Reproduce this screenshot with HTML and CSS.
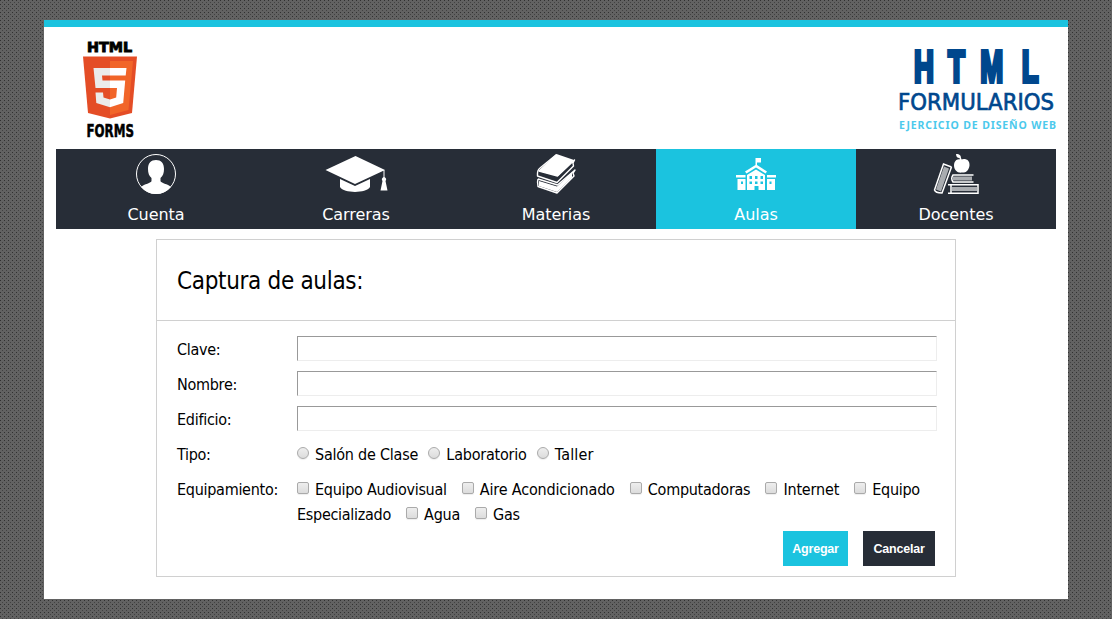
FILE: index.html
```html
<!DOCTYPE html>
<html lang="es">
<head>
<meta charset="utf-8">
<title>Captura de aulas</title>
<link rel="stylesheet" href="styles.css">
</head>
<body>
<div class="page">
  <header class="header">
    <svg class="logo" width="90" height="110" viewBox="70 35 90 110" role="img" aria-label="HTML5 Forms">
      <text x="87" y="51.500" class="logo-top" textLength="45" lengthAdjust="spacingAndGlyphs">HTML</text>
      <path fill="#e44d26" d="M83 56.500h54l-5 56.500-22 5.500-22-5.500z"/>
      <path fill="#f16529" d="M110 61h23l-4.500 49-18.500 5z"/>
      <path fill="#ebebeb" d="M110 68H93.500l2 20H110v-7.500h-7.500l-.5-5h8zM110 99.500l-6.500-2-.5-5h-7.500l.8 10.500 13.700 4.200z"/>
      <path fill="#fff" d="M110 68h16.500l-.8 7.500H110zM110 80.500h15.200l-2 22.500-13.200 4.200v-7.700l6.200-2 .8-9.500h-7z"/>
      <text x="86.500" y="136.500" class="logo-bottom" textLength="47.500" lengthAdjust="spacingAndGlyphs">FORMS</text>
    </svg>
    <svg class="brand" width="166" height="100" viewBox="894 40 166 100" role="img" aria-label="HTML Formularios">
      <g class="brand-html" transform="scale(.62 1)">
        <text y="82" x="1474 1529 1581 1648">HTML</text>
      </g>
      <text x="898" y="110" class="brand-name" textLength="156" lengthAdjust="spacingAndGlyphs">FORMULARIOS</text>
      <text x="899" y="128.500" class="brand-sub" textLength="157" lengthAdjust="spacing">EJERCICIO DE DISEÑO WEB</text>
    </svg>
  </header>
  <nav class="nav">
    <a class="nav-item">
      <svg class="icon" viewBox="0 0 80 50"><circle cx="40" cy="25" r="19.500" fill="none" stroke="#fff"/><path fill="#fff" d="M40 11c5 0 8 3 8 9 0 4-1 7-3.500 9v3c0 2 7.500 3 10.500 6a19.500 19.500 0 0 1-30 0c3-3 10.500-4 10.500-6v-3c-2.500-2-3.500-5-3.500-9 0-6 3-9 8-9z"/></svg>
      <span>Cuenta</span>
    </a>
    <a class="nav-item">
      <svg class="icon" viewBox="0 0 80 50"><path fill="#fff" d="M39.500 7 69 21 39 35 9.500 21zM24 30l15 7 15-7v8c-4 6.500-26 6.500-30 0zM67.500 21h1v7c2 1 2 3 1 4l2 9.500h-7l2-9.500c-1-1-1-3 1-4z"/></svg>
      <span>Carreras</span>
    </a>
    <a class="nav-item">
      <svg class="icon" viewBox="0 0 80 50"><path fill="#fff" d="M40.500 5 58 11 42 27 22 22zM23 32l18 5.500 15-14v5L41 43l-18-6z"/><path fill="none" stroke="#fff" stroke-width="1.400" stroke-linejoin="round" d="M40.500 5.500 24 19q-3 2-2.500 8l19.500 6.500L57.500 17l-.5-3 1.500-3L41.500 27 23 22M22 30q-1 3 0 7.500L41 44l17-17-1-3 2-3-17.500 15L22 30"/></svg>
      <span>Materias</span>
    </a>
    <a class="nav-item nav-item--active">
      <svg class="icon" viewBox="0 0 80 50"><path fill="#fff" fill-rule="evenodd" d="M39.500 16V9h5.500v4.500h-4V16L51 22.500l-1.500 2L40 18.500l-9.500 6-1.500-2zM40 20.500l9 5.500v15h-6.500v-4h-4v4H31V26zM33.500 27v3H36v-3zm5.500 0v3h2.500v-3zm5.500 0v3H47v-3zm-11 5.500V35H36v-2.500zm5.500 0V35h2.500v-2.500zm5.500 0V35H47v-2.500zM20 26h9.500v2.500H20zm31 0h9v2.500h-9zM21.500 30h8v11h-8zm29.500 0h8v11h-8zM25 32.500V35h2v-2.500zm28.500 0V35h2v-2.500z"/></svg>
      <span>Aulas</span>
    </a>
    <a class="nav-item">
      <svg class="icon" viewBox="0 0 80 50"><path fill="#fff" d="M45 10.500c4-1.500 9 0 8.500 6-.5 4-3 7-5.500 7s-3 .3-5 0c-4-1-6-6-4.500-10 1-3 4-4 6.500-3zM40 5c4 0 5 2 5 4 1 1 0 3 0 3s-1-3-2-3-3-1-3-4z"/><g fill="#a9acb0"><path d="m28 17.500 5 2-8 23-5-2z"/><path d="M37 27.500h19v4H37zM36 38h25v4H36z"/></g><path fill="none" stroke="#fff" stroke-width="1.500" d="m35.500 18-8-3-9 26q1 3 7.500 3l9.500-26M57.500 26H37q-2.500 3.500 0 7h20.500M32 35.800h30v8.400H32M35 36v8"/></svg>
      <span>Docentes</span>
    </a>
  </nav>
  <form class="form">
    <h1 class="form-title">Captura de aulas:</h1>
    <div class="fields">
      <label class="name" for="clave">Clave:</label><input class="text-input" id="clave" type="text">
      <label class="name" for="nombre">Nombre:</label><input class="text-input" id="nombre" type="text">
      <label class="name" for="edificio">Edificio:</label><input class="text-input" id="edificio" type="text">
      <span class="name">Tipo:</span>
      <div class="options radios"><label><input type="radio" name="tipo">Salón de Clase</label><label><input type="radio" name="tipo">Laboratorio</label><label class="wide"><input type="radio" name="tipo">Taller</label></div>
      <span class="name">Equipamiento:</span>
      <div class="options checks">
        <label><input type="checkbox">Equipo Audiovisual</label>
        <label class="loose"><input type="checkbox">Aire Acondicionado</label>
        <label><input type="checkbox">Computadoras</label>
        <label class="loose"><input type="checkbox">Internet</label>
        <label><input type="checkbox" id="especializado">Equipo</label>
        <label for="especializado">Especializado</label>
        <label><input type="checkbox">Agua</label>
        <label><input type="checkbox">Gas</label>
      </div>
    </div>
    <div class="actions"><button class="button button--primary" type="button">Agregar</button><button class="button" type="button">Cancelar</button></div>
  </form>
</div>
</body>
</html>
```
FILE: styles.css
```css
* { box-sizing: border-box; }
body {
  margin: 0;
  padding: 20px 44px;
  min-height: 619px;
  background-color: #626262;
  background-image:
    conic-gradient(from 0deg at 1px 1px, transparent 75%, #303030 0),
    conic-gradient(from 0deg at 1px 1px, transparent 75%, #424242 0);
  background-size: 4px 4px, 4px 4px;
  background-position: 0 0, 2px 2px;
  font-family: "DejaVu Sans Condensed", "DejaVu Sans", Tahoma, sans-serif;
  font-size: 16px;
  color: #000;
}
.page { height: 579px; padding: 0 12px; border-top: 7px solid #1bc3df; background: #fff; }
.header { display: flex; justify-content: space-between; height: 122px; padding-top: 8px; }
.logo { margin-left: 14px; overflow: visible; }
.brand { margin: 5px -4px 0 0; overflow: visible; }
.logo-top { font: bold 13.500px "DejaVu Sans", sans-serif; stroke: #000; stroke-width: .9px; }
.logo-bottom { font: bold 17px "DejaVu Sans Condensed", "DejaVu Sans", sans-serif; stroke: #000; stroke-width: .5px; }
.brand-html { font: bold 44.500px "Liberation Sans", sans-serif; fill: #00478d; stroke: #00478d; stroke-width: 4px; }
.brand-name { font: 23px "DejaVu Sans", sans-serif; fill: #00478d; stroke: #00478d; stroke-width: .7px; }
.brand-sub { font: bold 10.500px "Noto Sans", sans-serif; fill: #4cc9ec; }
.nav { display: grid; grid-template-columns: repeat(5, 1fr); height: 80px; background: #272d37; }
.nav-item { display: flex; flex-direction: column; align-items: center; height: 80px; color: #fff; font-family: "DejaVu Sans", Verdana, sans-serif; line-height: 32px; letter-spacing: -.05px; }
.nav-item--active { background: #1bc3df; }
.icon { display: block; flex: none; width: 80px; height: 50px; }
.form { width: 800px; height: 338px; margin: 10px auto 0; border: 1px solid #d0d0d0; }
.form-title { height: 81px; margin: 0; padding: 1px 20px 0; border-bottom: 1px solid #d0d0d0; font-size: 24px; font-weight: normal; line-height: 81px; letter-spacing: -.32px; }
.fields { display: grid; grid-template-columns: 120px 640px; grid-auto-rows: 25px; row-gap: 10px; padding: 15px 0 0 20px; }
.name, .options { line-height: 25px; letter-spacing: -.28px; }
.name { padding-top: 1px; }
.options { display: flex; flex-wrap: wrap; height: 51px; padding-top: 1px; }
.options label { height: 25px; white-space: nowrap; }
.radios { column-gap: 10.300px; height: 25px; letter-spacing: -.23px; }
.checks { column-gap: 15.100px; width: 635px; }
.text-input { width: 640px; height: 25px; border: 1px solid #ededed; border-top-color: #999; border-left-color: #999; background: #fff; font: inherit; }
.options input { appearance: none; width: 12px; height: 12px; margin: 0 6px 0 0; border: 1px solid #aaa; border-radius: 2px; background: linear-gradient(#eee, #dcdcdc); box-shadow: 0 1px 1px #eee; vertical-align: 1px; }
.radios input { border-radius: 50%; }
.options .loose { letter-spacing: -.17px; }
.options .wide { letter-spacing: .2px; }
.actions { display: flex; justify-content: flex-end; gap: 15px; padding: 30px 20px 0 0; }
.button { width: 72px; height: 35px; padding: 0; border: 0; background: #272d37; color: #fff; font: bold 12.500px "Liberation Sans", Arial, sans-serif; letter-spacing: -.2px; }
.button--primary { width: 65px; background: #1bc3df; }
```
